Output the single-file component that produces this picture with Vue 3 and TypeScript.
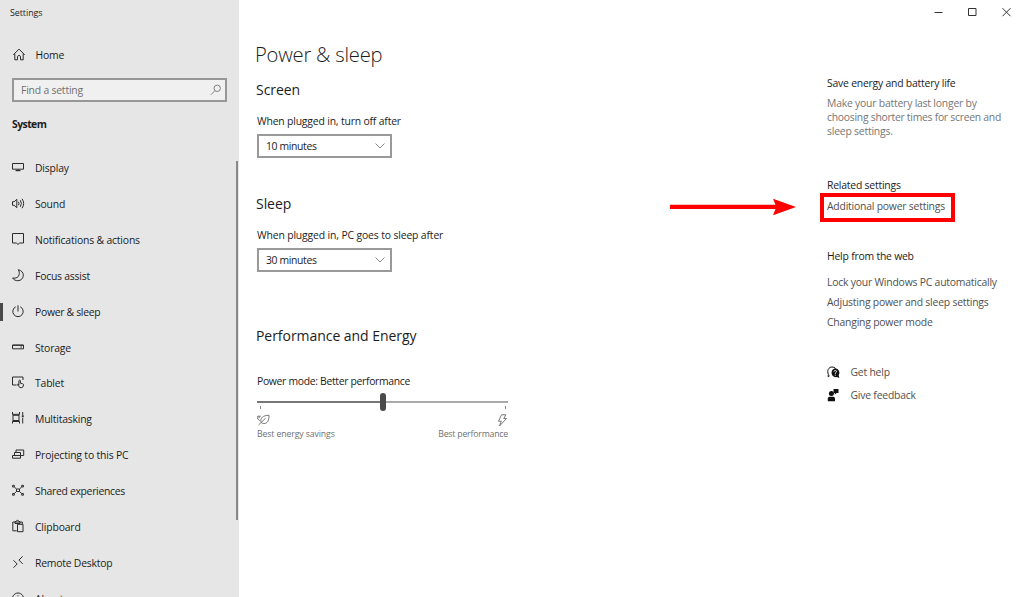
<script setup lang="ts">
import { ref } from 'vue'

interface NavItem {
    label: string
    stroke: string
    fill?: string
    spacing?: number
}

const search = ref('')
const active = ref('Power & sleep')

const items: NavItem[] = [
    { label: 'Display', stroke: 'M2.5 3.5h11v5.7h-11zM8 9.2v1.6', fill: 'M5.6 10h4.8v1.2H5.6z' },
    { label: 'Sound', stroke: 'M2.5 5.7h1.7l2.6-2.4v8.4L4.2 9.3H2.5zM8.5 5.8q1.1 1.7 0 3.4M10.3 4.2q2.2 3.3 0 6.6M12.1 2.8q3.1 4.7 0 9.4' },
    { label: 'Notifications & actions', stroke: 'M2.5 1.5h11v9.500H9.7L8 12.400 6.3 11H2.5z' },
    { label: 'Focus assist', stroke: 'M8.3 1.7c3.1.7 5 2.8 5 5.5 0 3.3-2.4 5.5-5.4 5.5-2.3 0-4.2-.9-5.3-2.7 3.6.6 5.9-.6 6.500-3.200.4-1.8.2-3.5-.8-5.100z', spacing: -0.22 },
    { label: 'Power & sleep', stroke: 'M8 1.300v6.200M5.700 2.800a5.200 5.200 0 1 0 4.600 0', spacing: -0.3 },
    { label: 'Storage', stroke: 'M2.5 5h11v3.800h-11zM3 5.300h10', fill: 'M10.5 6.500h1.5v1h-1.5z' },
    { label: 'Tablet', stroke: 'M6.500 10h-4V2h10.500v3M8.900 10.500V5.600q.8-1 1.500 0v2.600l2.200.5q1 .3.900 1.400-.2 2.600-2.200 2.600-1.600 0-2.400-1.100L7.300 9.600q.3-1 1.600.2' },
    { label: 'Multitasking', stroke: 'M2.500 1v2.300h7V1M2.500 12.500V10.500h7v2M3 3.300v7.200M9 3.300v7.200M3 4.300h6M3 9.500h6M12.700 1v3M12.700 7v5.500', fill: 'M11.800 4.300h1.900v2h-1.900z', spacing: -0.2 },
    { label: 'Projecting to this PC', stroke: 'M6 5V3h7.700v5.500H11M4.500 8.500V5.500h6v3M2.500 8.500h8v2.700h-8z' },
    { label: 'Shared experiences', stroke: 'M4.300 4 6.600 6.100M11.700 4 9.400 6.100M4.300 10.500 6.600 8.400M11.700 10.500 9.400 8.400M6.500 6h3v2.500h-3zM2.600 2.300h1.700V4H2.600zM11.700 2.300h1.700V4h-1.700zM2.600 10.500h1.700v1.700H2.600zM11.700 10.500h1.700v1.700h-1.700z', spacing: -0.3 },
    { label: 'Clipboard', stroke: 'M6.800 11.800h-4V3h9.500v2.200M5 4.500V2.800L7.500 1.300 10 2.800v1.700zM7.500 5.300H13v7.400H7.500z' },
    { label: 'Remote Desktop', stroke: 'M3.500 5.300l3.700 3.700-3.700 3.700M12.700 1.300 8.900 5.100l3.800 3.800', spacing: -0.22 },
    { label: 'About', stroke: 'M8 2a5.500 5.500 0 1 0 .01 0zM8 6.500v4M8 4.300v1' },
]

const webLinks = [
    'Lock your Windows PC automatically',
    'Adjusting power and sleep settings',
    'Changing power mode',
]
</script>

<template>
    <div class="window">
        <aside class="sidebar">
            <div class="app-title">Settings</div>
            <div class="home">
                <svg class="icon" viewBox="0 0 16 16">
                    <path d="M2.3 7.8 8 2.1l5.700 5.700M3.800 6.600v6.200h2.700V9.300q1.500-2 3 0v3.500h2.700V6.600" />
                </svg>
                <span>Home</span>
            </div>
            <div class="search">
                <input v-model="search" placeholder="Find a setting" />
                <svg class="lens" viewBox="0 0 12 12">
                    <circle cx="7.2" cy="4.3" r="3.2" />
                    <path d="M4.900 6.700 1 10.700" />
                </svg>
            </div>
            <div class="category">System</div>
            <div class="nav-area">
                <nav>
                    <div v-for="item in items" :key="item.label" class="nav-item"
                        :class="{ active: item.label === active }" @click="active = item.label">
                        <svg class="icon" viewBox="0 0 16 16">
                            <path :d="item.stroke" />
                            <path v-if="item.fill" class="solid" :d="item.fill" />
                        </svg>
                        <span :style="{ letterSpacing: (item.spacing ?? -0.17) + 'px' }">{{ item.label }}</span>
                    </div>
                </nav>
                <div class="scrollbar"></div>
            </div>
        </aside>

        <main class="content">
            <h1>Power &amp; sleep</h1>
            <section class="screen">
                <h2>Screen</h2>
                <label>When plugged in, turn off after</label>
                <div class="select">
                    <span>10 minutes</span>
                    <svg viewBox="0 0 12 8"><path d="M1.500 1.500 6 6l4.500-4.500" /></svg>
                </div>
            </section>
            <section class="sleep">
                <h2>Sleep</h2>
                <label>When plugged in, PC goes to sleep after</label>
                <div class="select">
                    <span>30 minutes</span>
                    <svg viewBox="0 0 12 8"><path d="M1.500 1.500 6 6l4.500-4.500" /></svg>
                </div>
            </section>
            <section class="energy">
                <h2>Performance and Energy</h2>
                <label>Power mode: Better performance</label>
                <div class="slider">
                    <div class="track filled"></div>
                    <div class="thumb"></div>
                    <div class="track"></div>
                </div>
                <div class="ticks"><i></i><i></i></div>
                <div class="ends">
                    <svg class="leaf" viewBox="0 0 13 12">
                        <path d="M1.500 11 8.500 4.300M4 8.200C3 3.800 6 1.500 12 1.200c.2 5-1.500 8.300-5 8.300-1.200 0-2.200-.4-3-1.300zM3.800 2.200H.7v2.600l2.100 1.900M2.200 2.200v2" />
                    </svg>
                    <svg class="bolt" viewBox="0 0 12 13">
                        <path d="M5.500.8h4.300L7.800 4.500h2.700L3.500 12l1.800-4.800H2.500z" />
                    </svg>
                </div>
                <div class="captions">
                    <span>Best energy savings</span>
                    <span class="best">Best performance</span>
                </div>
            </section>
        </main>

        <aside class="related">
            <div class="controls">
                <svg viewBox="0 0 10 10"><path d="M1.500 5.500h8" /></svg>
                <svg viewBox="0 0 10 10"><path d="M1.500 1.500h7.500v7h-7.500z" /></svg>
                <svg viewBox="0 0 10 10"><path d="M1.500 1.200l8 8M9.500 1.200l-8 8" /></svg>
            </div>
            <h3 class="save">Save energy and battery life</h3>
            <p>Make your battery last longer by<br /><span class="tight">choosing shorter times for screen and</span><br />sleep settings.</p>
            <h3 class="rel">Related settings</h3>
            <div class="highlight">
                <a>Additional power settings</a>
                <svg class="arrow" viewBox="0 0 128 18">
                    <path d="M1 6.800H106.500L104 .8 127 9 104 17.200 106.500 11H1z" />
                </svg>
            </div>
            <h3 class="help">Help from the web</h3>
            <a v-for="link in webLinks" :key="link" class="web">{{ link }}</a>
            <div class="action get">
                <svg viewBox="0 0 13 13">
                    <path class="outline" d="M2.600 9.800 1 10.600l.4-2.200C-.4 4.500 1.800 1 5 1q2.200 0 3.500 1.400" />
                    <path d="M8.200 2.200a4.500 4.500 0 0 1 3.500 7l.6 2.800-2.400-.9a4.500 4.500 0 1 1-1.700-8.900z" />
                    <path class="mark" d="M6.900 5.600q.2-1.100 1.400-1.100 1.300.1 1.200 1.200-.1.700-1.200 1.300v.8M8.300 8.700v1" />
                </svg>
                <span>Get help</span>
            </div>
            <div class="action">
                <svg viewBox="0 0 13 13">
                    <path d="M6.500 0H11.500v4H9.500L7.800 5.700V4H6.500z" />
                    <circle cx="4.400" cy="4.600" r="2.500" />
                    <path d="M.8 12.200V9.600Q.8 7.800 2.600 7.800h3.600Q8 7.800 8 9.600v2.600z" />
                </svg>
                <span>Give feedback</span>
            </div>
        </aside>
    </div>
</template>

<style>
body {
    margin: 0;
    overflow: hidden;
}
</style>

<style scoped>
.window {
    display: flex;
    width: 1024px;
    height: 597px;
    overflow: hidden;
    background: #fff;
    color: #1c1c1c;
    font-family: "Open Sans", "Noto Sans", sans-serif;
    font-size: 10.4px;
    letter-spacing: -0.17px;
    white-space: nowrap;
}

svg {
    flex: none;
    overflow: visible;
}

.sidebar {
    display: flex;
    flex-direction: column;
    flex: none;
    width: 239px;
    height: 597px;
    background: #e6e6e6;
}

.app-title {
    height: 26px;
    padding-left: 10px;
    font-size: 8.9px;
    line-height: 26px;
    letter-spacing: -0.05px;
}

.home {
    display: flex;
    align-items: center;
    gap: 9px;
    height: 20px;
    margin-top: 19px;
    padding-left: 10.5px;
}

.icon {
    width: 16px;
    height: 16px;
    fill: none;
    stroke: #2b2b2b;
    stroke-width: 1;
}

.icon .solid {
    fill: #2b2b2b;
    stroke: none;
}

.search {
    display: flex;
    align-items: center;
    box-sizing: border-box;
    width: 215px;
    height: 24px;
    margin: 13px 0 0 12px;
    padding: 0 3px 0 7px;
    border: 2px solid #979797;
    background: #f0f0f0;
}

.search input {
    flex: 1;
    min-width: 0;
    padding: 0 0 1px;
    border: 0;
    outline: 0;
    background: none;
    font: inherit;
    letter-spacing: -0.2px;
}

.search input::placeholder {
    color: #707070;
    opacity: 1;
}

.lens {
    width: 12px;
    height: 12px;
    fill: none;
    stroke: #808080;
}

.category {
    height: 20px;
    margin-top: 12px;
    padding-left: 12px;
    font-weight: 700;
    line-height: 20px;
    letter-spacing: -0.55px;
}

.nav-area {
    display: flex;
    justify-content: space-between;
    height: 447px;
    margin-top: 16px;
    overflow: hidden;
}

nav {
    padding-top: 0.3px;
}

.nav-item {
    display: flex;
    align-items: center;
    gap: 9px;
    width: 229px;
    height: 35.88px;
    box-sizing: border-box;
    padding-left: 10px;
}

.nav-item.active::before {
    content: "";
    width: 3px;
    height: 18px;
    margin: 0 -2px 0 -10px;
    background: #4c4a48;
}

.scrollbar {
    width: 2px;
    height: 359px;
    margin: 11px 1px 0 0;
    background: #8a8a8a;
}

.content {
    flex: none;
    width: 270px;
    margin-left: 17px;
    padding-top: 39px;
}

h1,
h2,
h3 {
    margin: 0;
    font-weight: 400;
}

h1 {
    height: 30px;
    margin-left: -1px;
    font-size: 20.2px;
    font-weight: 340;
    line-height: 30px;
    letter-spacing: -0.22px;
}

h2 {
    height: 20px;
    font-size: 14px;
    line-height: 20px;
    letter-spacing: -0.05px;
}

section label {
    display: block;
    height: 16px;
    margin: 13px 0 0 1px;
    line-height: 16px;
}

.screen {
    padding-top: 11px;
}

.sleep {
    padding-top: 36px;
}

.sleep label {
    letter-spacing: -0.14px;
}

.energy {
    padding-top: 54px;
}

.select {
    display: flex;
    align-items: center;
    justify-content: space-between;
    box-sizing: border-box;
    width: 135px;
    height: 24px;
    margin: 5px 0 0 1px;
    padding: 0 4px 0 7px;
    border: 2px solid #999;
    letter-spacing: -0.35px;
}

.select svg {
    width: 12px;
    height: 8px;
    fill: none;
    stroke: #888;
}

.energy label {
    margin-top: 27px;
    letter-spacing: -0.32px;
}

.slider {
    display: flex;
    align-items: center;
    width: 251px;
    height: 20px;
    margin: 3px 0 0 1px;
}

.track {
    flex: 1;
    height: 2px;
    background: #aaa;
}

.track.filled {
    background: #777;
}

.thumb {
    width: 6px;
    height: 18px;
    border-radius: 3px;
    background: #4c4a48;
}

.ticks {
    display: flex;
    justify-content: space-between;
    width: 246px;
    height: 3px;
    margin: -6px 0 0 4px;
}

.ticks i {
    width: 1px;
    height: 3px;
    background: #888;
}

.ends {
    display: flex;
    justify-content: space-between;
    align-items: center;
    width: 251px;
    height: 14px;
    margin: 4px 0 0 1px;
    fill: none;
    stroke: #6b6b6b;
    stroke-width: 0.9;
}

.leaf {
    width: 13px;
    height: 12px;
}

.bolt {
    width: 12px;
    height: 13px;
}

.captions {
    display: flex;
    justify-content: space-between;
    width: 251px;
    height: 14px;
    margin-left: 1px;
    color: #707070;
    font-size: 8.7px;
    line-height: 15px;
    letter-spacing: -0.1px;
}

.best {
    letter-spacing: -0.18px;
}

.related {
    display: flex;
    flex-direction: column;
    align-items: flex-start;
    margin-left: 301px;
    letter-spacing: -0.21px;
}

.controls {
    display: flex;
    gap: 24px;
    height: 24px;
    margin-left: 106px;
    align-items: center;
    fill: none;
    stroke: #333;
}

.controls svg {
    width: 10px;
    height: 10px;
}

h3 {
    height: 16px;
    font-size: 10.4px;
    line-height: 16px;
}

.save {
    margin-top: 51px;
}

p {
    margin: 5px 0 0;
    color: #767676;
    line-height: 14px;
}

.tight {
    letter-spacing: -0.27px;
}

.rel {
    margin-top: 39px;
}

.highlight {
    position: relative;
    box-sizing: border-box;
    width: 135px;
    height: 29px;
    margin: 0 0 0 -7px;
    padding-left: 3px;
    border: 4px solid #fe0000;
    line-height: 18px;
}

a {
    color: #505050;
}

/* pointer drawn over the empty space left of the link */
.arrow {
    position: absolute;
    top: 1px;
    left: -155px;
    width: 128px;
    height: 18px;
    fill: #fe0000;
}

.help {
    margin: 26px 0 8px;
}

.web {
    height: 20.2px;
    line-height: 20.2px;
}

.action {
    display: flex;
    align-items: center;
    gap: 10.5px;
    height: 23.2px;
    color: #505050;
}

.action svg {
    width: 13px;
    height: 13px;
    fill: #111;
}

.action .outline {
    fill: none;
    stroke: #111;
}

.action .mark {
    fill: none;
    stroke: #fff;
    stroke-width: 0.9;
}

.get {
    margin-top: 28px;
}
</style>
